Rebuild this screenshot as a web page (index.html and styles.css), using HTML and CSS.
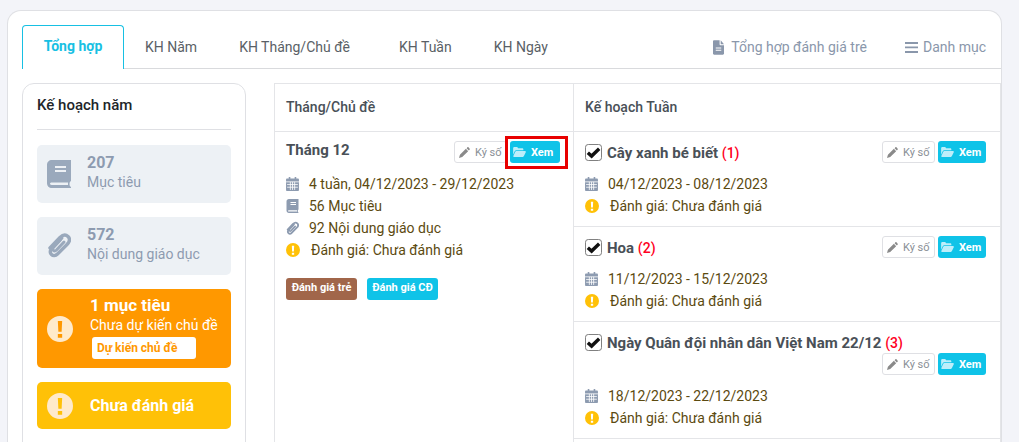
FILE: index.html
```html
<!DOCTYPE html>
<html lang="vi">
<head>
<meta charset="utf-8">
<title>Kế hoạch</title>
<link rel="stylesheet" href="styles.css">
</head>
<body>
<svg class="defs" width="0" height="0" aria-hidden="true">
  <symbol id="i-book" viewBox="0 0 24 28"><path fill-rule="evenodd" d="M5 0h19v21c-1 .4-1.500 1.400-1.500 3s.5 2.600 1.500 3v1H5c-3 0-5-2-5-5V5c0-3 2-5 5-5zM8 6v2h11V6zM8 10v2h11v-2zM4.500 22.500c-.8 0-1.500.6-1.500 1.300s.7 1.200 1.500 1.200H21v-2.500z"/></symbol>
  <symbol id="i-clip" viewBox="0 0 24 28"><path fill="none" stroke="currentColor" stroke-width="3.400" stroke-linecap="round" d="M13 8 5 16.500c-2 2.200-2 4.500-.5 6s4 1.500 6-.5L20 12.500c3-3 3-6 1-8s-5-2-8 1L3 16"/><path fill="none" stroke="currentColor" stroke-width="3" stroke-linecap="round" d="M15 6 6.500 15c-1 1-1 2.500-.2 3.300s2.200.7 3.200-.3L17 10"/></symbol>
  <symbol id="i-warn" viewBox="0 0 24 24"><path fill-rule="evenodd" d="M12 0a12 12 0 1 1 0 24 12 12 0 0 1 0-24zM10 4.500l.5 10h3l.5-10zM10 16.500v3.500h4v-3.500z"/></symbol>
  <symbol id="i-cal" viewBox="0 0 24 26"><path d="M5 0h3v3h8V0h3v3h3c1 0 2 1 2 2v19c0 1-1 2-2 2H2c-1 0-2-1-2-2V5c0-1 1-2 2-2h3z"/><path fill="none" stroke="#fff" stroke-width="1.500" d="M0 9h24M2 14h20M2 19h20M8 9v15M12 9v15M16 9v15"/></symbol>
  <symbol id="i-pencil" viewBox="0 0 24 24"><path d="M0 24l2-7L15 4l5 5L7 22zM16.500 2.500 18 1c1-1 2-1 3 0l2 2c1 1 1 2 0 3l-1.500 1.500z"/></symbol>
  <symbol id="i-folder" viewBox="0 0 28 22"><path d="M0 3c0-1.500 1-3 2.500-3H9l2 3h9c1.500 0 2.500 1 2.500 2.500V7H7c-1.500 0-2.500.7-3.200 2L0 17z"/><path d="M7 9h19c1.500 0 2.500 1 1.800 2.500l-3.800 8c-.6 1.500-1.500 2.500-3 2.500H2c-1.500 0-2.200-1-1.600-2.300l4-8.700C5 9.800 6 9 7 9z"/></symbol>
  <symbol id="i-file" viewBox="0 0 20 26"><path fill-rule="evenodd" d="M2 0h10v7c0 1 1 2 2 2h6v15c0 1-1 2-2 2H2c-1 0-2-1-2-2V2C0 1 1 0 2 0zM5 13v2h10v-2zM5 17v2h10v-2zM14 0l6 7h-6z"/></symbol>
  <symbol id="i-bars" viewBox="0 0 24 20"><path d="M0 0h24v3.500H0zM0 8h24v3.500H0zM0 16.500h24V20H0z"/></symbol>
  <symbol id="i-check" viewBox="0 0 18 18"><rect x=".5" y=".5" width="17" height="17" rx="3" fill="#fff" stroke="#767676"/><path d="M3 9.200 7 12.800 15 5" fill="none" stroke="#111" stroke-width="3.600"/></symbol>
</svg>

<main class="card">
  <nav class="tabs">
    <a class="tab tab-active">Tổng hợp</a>
    <a class="tab tab-nam">KH Năm</a>
    <a class="tab tab-thang">KH Tháng/Chủ đề</a>
    <a class="tab tab-tuan">KH Tuần</a>
    <a class="tab tab-ngay">KH Ngày</a>
    <div class="tab-tools">
      <a class="tool tool-danh"><svg class="ic-file"><use href="#i-file"/></svg>Tổng hợp đánh giá trẻ</a>
      <a class="tool tool-list"><svg class="ic-bars"><use href="#i-bars"/></svg>Danh mục</a>
    </div>
  </nav>

  <div class="content">
    <aside class="panel">
      <h2 class="panel-title">Kế hoạch năm</h2>
      <div class="tile tile-grey">
        <svg class="tile-ic"><use href="#i-book"/></svg>
        <div class="tile-body"><b class="tile-num">207</b><span class="tile-sub">Mục tiêu</span></div>
      </div>
      <div class="tile tile-grey">
        <svg class="tile-ic"><use href="#i-clip"/></svg>
        <div class="tile-body"><b class="tile-num">572</b><span class="tile-sub">Nội dung giáo dục</span></div>
      </div>
      <div class="tile tile-orange">
        <svg class="tile-warn"><use href="#i-warn"/></svg>
        <div class="tile-body">
          <b class="tile-num">1 mục tiêu</b><span class="tile-sub">Chưa dự kiến chủ đề</span>
          <a class="tile-btn">Dự kiến chủ đề</a>
        </div>
      </div>
      <div class="tile tile-yellow">
        <svg class="tile-warn"><use href="#i-warn"/></svg>
        <div class="tile-body"><b class="tile-num">Chưa đánh giá</b></div>
      </div>
    </aside>

    <section class="table">
      <div class="col col-month">
        <h3 class="col-head">Tháng/Chủ đề</h3>
        <div class="month">
          <div class="row-top">
            <strong class="row-title month-title">Tháng 12</strong>
            <div class="actions">
              <a class="btn-sign"><svg class="ic-pencil"><use href="#i-pencil"/></svg>Ký số</a>
              <a class="btn-view btn-marked"><svg class="ic-folder"><use href="#i-folder"/></svg>Xem</a>
            </div>
          </div>
          <ul class="facts">
            <li><svg class="ic-cal"><use href="#i-cal"/></svg>4 tuần, 04/12/2023 - 29/12/2023</li>
            <li><svg class="ic-book"><use href="#i-book"/></svg>56 Mục tiêu</li>
            <li><svg class="ic-clip"><use href="#i-clip"/></svg>92 Nội dung giáo dục</li>
            <li><svg class="ic-warn"><use href="#i-warn"/></svg>Đánh giá: Chưa đánh giá</li>
          </ul>
          <div class="badges">
            <a class="badge badge-brown">Đánh giá trẻ</a>
            <a class="badge badge-cyan">Đánh giá CĐ</a>
          </div>
        </div>
      </div>

      <div class="col col-week">
        <h3 class="col-head">Kế hoạch Tuần</h3>
        <article class="week">
          <div class="row-top">
            <svg class="ic-check"><use href="#i-check"/></svg>
            <strong class="row-title">Cây xanh bé biết <span class="num">(1)</span></strong>
            <div class="actions">
              <a class="btn-sign"><svg class="ic-pencil"><use href="#i-pencil"/></svg>Ký số</a>
              <a class="btn-view"><svg class="ic-folder"><use href="#i-folder"/></svg>Xem</a>
            </div>
          </div>
          <ul class="facts">
            <li><svg class="ic-cal"><use href="#i-cal"/></svg>04/12/2023 - 08/12/2023</li>
            <li><svg class="ic-warn"><use href="#i-warn"/></svg>Đánh giá: Chưa đánh giá</li>
          </ul>
        </article>
        <article class="week">
          <div class="row-top">
            <svg class="ic-check"><use href="#i-check"/></svg>
            <strong class="row-title">Hoa <span class="num">(2)</span></strong>
            <div class="actions">
              <a class="btn-sign"><svg class="ic-pencil"><use href="#i-pencil"/></svg>Ký số</a>
              <a class="btn-view"><svg class="ic-folder"><use href="#i-folder"/></svg>Xem</a>
            </div>
          </div>
          <ul class="facts">
            <li><svg class="ic-cal"><use href="#i-cal"/></svg>11/12/2023 - 15/12/2023</li>
            <li><svg class="ic-warn"><use href="#i-warn"/></svg>Đánh giá: Chưa đánh giá</li>
          </ul>
        </article>
        <article class="week week-wrap">
          <div class="row-top">
            <svg class="ic-check"><use href="#i-check"/></svg>
            <strong class="row-title">Ngày Quân đội nhân dân Việt Nam 22/12 <span class="num">(3)</span></strong>
            <div class="actions">
              <a class="btn-sign"><svg class="ic-pencil"><use href="#i-pencil"/></svg>Ký số</a>
              <a class="btn-view"><svg class="ic-folder"><use href="#i-folder"/></svg>Xem</a>
            </div>
          </div>
          <ul class="facts">
            <li><svg class="ic-cal"><use href="#i-cal"/></svg>18/12/2023 - 22/12/2023</li>
            <li><svg class="ic-warn"><use href="#i-warn"/></svg>Đánh giá: Chưa đánh giá</li>
          </ul>
        </article>
      </div>
    </section>
  </div>
</main>
</body>
</html>
```

FILE: styles.css
```css
* { box-sizing: border-box; }
html, body { margin: 0; height: 442px; overflow: hidden; }
body {
  background: #f3f4f9;
  font-family: Roboto, "Liberation Sans", sans-serif;
  font-size: 14px;
  color: #495057;
  padding: 10px 17px 0 7px;
}
.defs { position: absolute; }
svg { fill: currentColor; flex: none; display: block; }

.card {
  background: #fff;
  border: 1px solid #dfe0e4;
  border-bottom: 0;
  border-radius: 14px 14px 0 0;
  height: 432px;
  padding: 14px 0 0 14px;
  width: 995px;
  overflow: hidden;
}

.tabs {
  display: flex;
  align-items: stretch;
  height: 44px;
  width: 979px;
  border-bottom: 1px solid #d9dadd;
}
.tab { padding-top: 14px; line-height: 16px; color: #5a5f66; margin-left: 0; }
.tab-active {
  width: 102px;
  height: 44px;
  text-align: center;
  color: #17c0e3;
  font-weight: 700;
  background: #fff;
  border: 1px solid #17c0e3;
  border-bottom: 0;
  border-radius: 4px 4px 0 0;
  padding-top: 12px;
}
.tab-nam { margin-left: 21px; }
.tab-thang { margin-left: 42px; }
.tab-tuan { margin-left: 49px; }
.tab-ngay { margin-left: 42px; }
.tab-tools { margin-left: auto; display: flex; gap: 38px; padding: 14px 15px 0 0; color: #8a97ab; }
.tool { display: flex; align-items: flex-start; gap: 7px; line-height: 17px; }
.tool-list { gap: 5px; }
.ic-file { width: 11px; height: 15px; margin-top: 1px; }
.ic-bars { width: 13px; height: 11px; margin-top: 3px; }

.content { display: flex; gap: 28px; padding-top: 14px; }

.panel {
  width: 224px;
  height: 420px;
  flex: none;
  border: 1px solid #dfe0e4;
  border-radius: 12px;
  padding: 0 14px;
}
.panel-title {
  margin: 0 0 15px;
  height: 46px;
  padding-top: 13px;
  font-size: 15px;
  line-height: 17px;
  font-weight: 500;
  color: #212529;
  border-bottom: 1px solid #dfe0e4;
}
.tile {
  display: flex;
  align-items: center;
  border-radius: 5px;
  margin-bottom: 14px;
  padding-left: 10px;
  color: #fff;
}
.tile-grey { height: 58px; background: #edf1f5; color: #8d9bb0; }
.tile-orange { height: 79px; background: #ff9800; }
.tile-yellow { height: 47px; background: #ffc107; }
.tile-ic { width: 24px; height: 28px; color: #9aa9bc; margin-right: 16px; }
.tile-warn { width: 26px; height: 26px; color: #ffeacb; margin-right: 17px; }
.tile-body { display: flex; flex-direction: column; align-items: flex-start; min-width: 0; }
.tile-grey .tile-body { padding-bottom: 4px; }
.tile-num { font-size: 16px; font-weight: 700; line-height: 19px; }
.tile-sub { line-height: 20px; }
.tile-orange .tile-num { margin-top: -3px; font-size: 17px; }
.tile-btn {
  width: 104px;
  height: 22px;
  margin: 2px 0 0 2px;
  padding-left: 5px;
  background: #fff;
  border-radius: 3px;
  color: #ff9800;
  font-size: 12px;
  font-weight: 700;
  line-height: 22px;
}

.table {
  width: 727px;
  height: 420px;
  display: flex;
  border: 1px solid #e4e5e8;
  border-bottom: 0;
}
.col-month { width: 299px; flex: none; border-right: 1px solid #e4e5e8; }
.col-week { flex: 1; min-width: 0; }
.col-head {
  margin: 0;
  height: 48px;
  padding: 15px 11px 0;
  font-size: 14px;
  line-height: 17px;
  font-weight: 500;
  color: #495057;
  border-bottom: 1px solid #e4e5e8;
}

.month { padding: 9px 13px 0 11px; }
.week { padding: 9px 14px 0 11px; height: 95px; border-bottom: 1px solid #e4e5e8; }
.week-wrap { height: 117px; }

.row-top { display: flex; align-items: flex-start; flex-wrap: wrap; }
.row-title { font-size: 15px; line-height: 20px; padding-top: 2px; font-weight: 700; color: #495057; }
.month-title { line-height: 18px; padding-top: 0; }
.num { color: #ff0022; font-size: 14px; font-weight: 500; }
.ic-check { width: 17px; height: 17px; margin: 3px 5px 0 0; }
.actions { margin-left: auto; display: flex; gap: 3px; }
.btn-sign {
  display: flex;
  align-items: center;
  width: 53px;
  height: 22px;
  padding-left: 4px;
  border: 1px solid #dfe0e4;
  border-radius: 3px;
  color: #8a8f96;
  font-size: 11px;
  gap: 5px;
}
.btn-view {
  display: flex;
  align-items: center;
  position: relative;
  width: 48px;
  height: 22px;
  padding-left: 3px;
  background: #0fc3e8;
  border-radius: 3px;
  color: #fff;
  font-size: 11px;
  font-weight: 700;
  gap: 5px;
}
.btn-marked { width: 50px; }
.btn-marked::after {
  content: "";
  position: absolute;
  inset: -5px -8px -6px -5px;
  border: 3px solid #e80000;
  pointer-events: none;
}
.ic-pencil { width: 11px; height: 11px; color: #8a8a8a; }
.ic-folder { width: 13px; height: 10px; color: #bdeefa; }

.facts { list-style: none; margin: 10px 0 0; padding: 0; color: #5c4a10; }
.facts li { display: flex; align-items: center; height: 22px; line-height: 22px; }
.ic-cal { width: 13px; height: 14px; color: #8d9bb0; margin-right: 10px; }
.ic-book { width: 13px; height: 14px; color: #8d9bb0; margin-right: 10px; }
.ic-clip { width: 13px; height: 15px; color: #8d9bb0; margin-right: 10px; }
.ic-warn { width: 14px; height: 14px; color: #ffc107; margin-right: 11px; }

.badges { display: flex; gap: 10px; margin-top: 17px; }
.badge {
  width: 71px;
  height: 22px;
  text-align: center;
  border-radius: 3px;
  color: #fff;
  font-size: 11px;
  font-weight: 700;
  line-height: 20px;
}
.badge-brown { background: #a1664a; }
.badge-cyan { background: #0fc3e8; }
```
